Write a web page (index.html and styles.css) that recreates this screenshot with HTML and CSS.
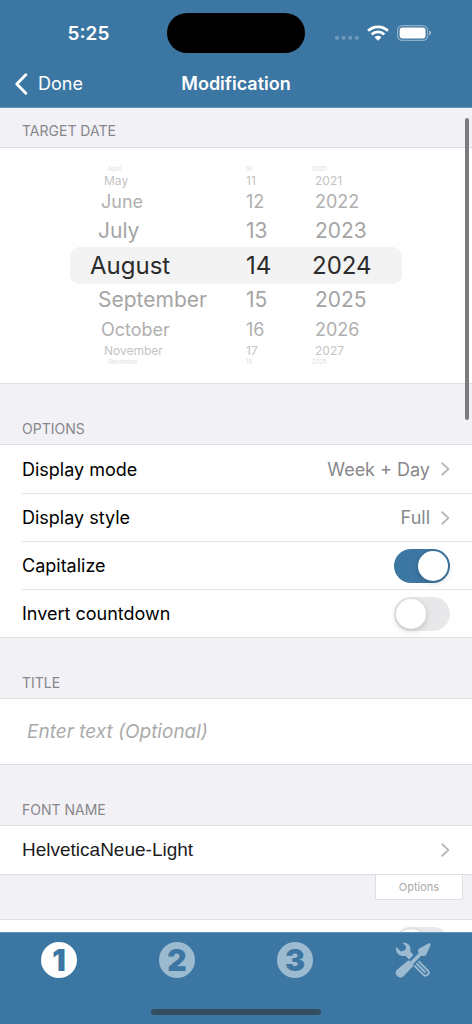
FILE: index.html
```html
<!DOCTYPE html>
<html lang="en">
<head>
<meta charset="utf-8">
<meta name="viewport" content="width=device-width, initial-scale=1">
<title>Modification</title>
<link rel="stylesheet" href="styles.css">
</head>
<body>
<div class="app">
  <header class="top">
    <div class="status">
      <time class="clock">5:25</time>
      <div class="island"></div>
      <div class="indicators">
        <svg class="dots" width="25" height="16" viewBox="0 0 25 16" aria-hidden="true"><g fill="#fff" opacity=".25"><circle cx="3" cy="12.8" r="2.1"/><circle cx="9.600" cy="12.8" r="2.1"/><circle cx="16.200" cy="12.8" r="2.1"/><circle cx="22.800" cy="12.8" r="2.1"/></g></svg>
        <svg width="22" height="16" viewBox="0 0 22 16" aria-hidden="true"><g fill="none" stroke="#fff" stroke-width="2.8"><path d="M1.1 5.8a14.2 14.2 0 0 1 19.8 0"/><path d="M4.7 9.5a9 9 0 0 1 12.6 0"/></g><path d="M7.5 12.2a5 5 0 0 1 7 0L11 15.8z" fill="#fff"/></svg>
        <svg width="35" height="16" viewBox="0 0 35 16" aria-hidden="true"><rect x=".6" y=".6" width="30" height="14.8" rx="4.8" fill="none" stroke="#fff" stroke-opacity=".42" stroke-width="1.2"/><rect x="2.6" y="2.6" width="26" height="10.8" rx="3" fill="#fff"/><path d="M32.2 5.3v5.4c2.4-.8 2.4-4.6 0-5.4z" fill="#fff" opacity=".5"/></svg>
      </div>
    </div>
    <nav class="bar">
      <button class="back" type="button">
        <svg width="13" height="22" viewBox="0 0 13 22" aria-hidden="true"><path d="M10.800 1.800 1.800 11l9 9.200" fill="none" stroke="#fff" stroke-width="2.9" stroke-linecap="round" stroke-linejoin="round"/></svg>
        Done
      </button>
      <h1 class="title">Modification</h1>
    </nav>
  </header>

  <main class="content">
    <h2 class="section first">TARGET DATE</h2>
    <div class="panel picker">
      <ul class="wheel month" role="listbox" aria-label="Month">
        <li class="far">April</li><li class="r3">May</li><li class="r2">June</li><li class="r1">July</li>
        <li class="current" role="option" aria-selected="true">August</li>
        <li class="r1">September</li><li class="r2">October</li><li class="r3">November</li><li class="far">December</li>
      </ul>
      <ul class="wheel day" role="listbox" aria-label="Day">
        <li class="far">10</li><li class="r3">11</li><li class="r2">12</li><li class="r1">13</li>
        <li class="current" role="option" aria-selected="true">14</li>
        <li class="r1">15</li><li class="r2">16</li><li class="r3">17</li><li class="far">18</li>
      </ul>
      <ul class="wheel year" role="listbox" aria-label="Year">
        <li class="far">2020</li><li class="r3">2021</li><li class="r2">2022</li><li class="r1">2023</li>
        <li class="current" role="option" aria-selected="true">2024</li>
        <li class="r1">2025</li><li class="r2">2026</li><li class="r3">2027</li><li class="far">2028</li>
      </ul>
    </div>

    <h2 class="section">OPTIONS</h2>
    <div class="panel rows">
      <button class="row" type="button"><span>Display mode</span><span class="value">Week + Day</span><svg class="chev" viewBox="0 0 9 14" aria-hidden="true"><path d="M1.2 1.2 7.4 7l-6.2 5.8"/></svg></button>
      <button class="row" type="button"><span>Display style</span><span class="value">Full</span><svg class="chev" viewBox="0 0 9 14" aria-hidden="true"><path d="M1.2 1.2 7.4 7l-6.2 5.8"/></svg></button>
      <label class="row"><span>Capitalize</span><input class="switch" type="checkbox" role="switch" checked></label>
      <label class="row"><span>Invert countdown</span><input class="switch" type="checkbox" role="switch"></label>
    </div>

    <h2 class="section" id="title-label">TITLE</h2>
    <div class="panel entry"><input class="text" type="text" placeholder="Enter text (Optional)" aria-labelledby="title-label"></div>

    <h2 class="section">FONT NAME</h2>
    <div class="panel rows">
      <button class="row font" type="button"><span>HelveticaNeue-Light</span><svg class="chev" viewBox="0 0 9 14" aria-hidden="true"><path d="M1.2 1.2 7.4 7l-6.2 5.8"/></svg></button>
    </div>
    <div class="more"><button class="options" type="button">Options</button></div>
    <div class="panel rows">
      <div class="row"><input class="switch" type="checkbox" role="switch" aria-label="Font option"></div>
    </div>
    <div class="scrollbar"></div>
  </main>

  <footer class="bottom">
    <nav class="tabs">
      <button class="tab active" type="button"><span class="num">1</span></button>
      <button class="tab" type="button"><span class="num">2</span></button>
      <button class="tab" type="button"><span class="num">3</span></button>
      <button class="tab" type="button" aria-label="Settings">
        <svg width="36" height="36" viewBox="0 0 36 36" aria-hidden="true">
          <g fill="none" stroke-linecap="round">
            <path d="m20 20 10.500 10.500" stroke="#9dbbd0" stroke-width="8"/>
            <path d="m20 20 10.500 10.500" stroke="#3c76a2" stroke-width="4.400"/>
            <path d="m21.500 21.500 8.500 8.500" stroke="#9dbbd0" stroke-width="1.800"/>
          </g>
          <path d="M1.200 5 6 9.500 10.500 8 11 4.500 7.500.8C13 .2 16.500 4 15.300 9.500L18.500 13 14 17.500 10.500 13.700C5 15-.2 11 1.200 5z" fill="#9dbbd0"/>
          <path d="M10 27.500 28 9.500" stroke="#3c76a2" stroke-width="7"/>
          <path d="M10 27.500 28 9.500" stroke="#9dbbd0" stroke-width="3.800"/>
          <path d="M12.200 19.200c1-.9 2.300-.8 3.200.1l2.300 2.300c.9.900.9 2 .1 3L8.800 34c-2 2-4.800 2-6.700.1s-1.900-4.700.1-6.600z" fill="#9dbbd0"/>
          <path d="m23.500 7 9.700-5.600c1.600-.8 3 .6 2.200 2.200L31 13.300c-1.300 1.300-4.500 1-6.200-.6S22.500 8.300 23.500 7z" fill="#9dbbd0"/>
        </svg>
      </button>
    </nav>
    <div class="home"></div>
  </footer>
</div>
</body>
</html>
```

FILE: styles.css
```css
* { box-sizing: border-box; }

body {
  margin: 0;
  font-family: Inter, "Liberation Sans", sans-serif;
  font-size: 18px;
  color: #000;
  background: #f2f1f6;
}

button, input { font: inherit; color: inherit; border: 0; background: none; padding: 0; margin: 0; }
h1, h2, ul { margin: 0; padding: 0; }

.app { display: flex; flex-direction: column; height: 100vh; }

.top { background: #3c76a2; color: #fff; border-bottom: 1px solid #6594b6; }
.status {
  display: grid;
  grid-template-columns: 1fr 138px 1fr;
  align-items: center;
  height: 60px;
  padding-top: 6px;
}
.clock { font-size: 19px; font-weight: 600; padding-left: 10px; text-align: center; }
.island { height: 40px; border-radius: 20px; background: #000; }
.indicators { display: flex; gap: 8px; padding-left: 29px; }

.bar {
  display: grid;
  grid-template-columns: 1fr auto 1fr;
  align-items: center;
  height: 47px;
  padding: 0 15px;
}
.back { display: flex; align-items: center; gap: 10px; justify-self: start; }
.title { font-size: 18px; font-weight: 600; }

.content { position: relative; flex: 1; min-height: 0; overflow: hidden; }
.section {
  display: flex;
  align-items: flex-end;
  height: 60px;
  padding: 0 22px 7px;
  font-size: 14px;
  line-height: 16px;
  font-weight: 400;
  color: #87868b;
}
.section.first { height: 39px; padding-bottom: 8px; }

.panel { background: #fff; border: solid #dfdfe3; border-width: 1px 0; }

.picker { display: flex; justify-content: center; align-items: center; height: 237px; }
.wheel { list-style: none; color: #a5a5a5; }
.wheel li { white-space: nowrap; }
.month { width: 176px; }
.day { width: 66px; }
.year { width: 90px; }
.wheel .current { height: 37px; font-size: 24px; line-height: 37px; color: #2b2b2b; background: #f3f3f3; }
.r1 { height: 32px; font-size: 21px; line-height: 32px; }
.r2 { height: 27px; font-size: 18px; line-height: 27px; color: #b0b0b0; }
.r3 { height: 15px; font-size: 12px; line-height: 15px; color: #c4c4c4; }
.far { height: 8px; font-size: 6px; line-height: 8px; color: #dcdcdc; }
.month .current { padding-left: 20px; border-radius: 9px 0 0 9px; }
.year .current { border-radius: 0 9px 9px 0; }
.month .r1 { padding-left: 28px; }
.month .r2 { padding-left: 31px; }
.month .r3 { padding-left: 34px; }
.month .far { padding-left: 38px; }
.year .r1, .year .r2, .year .r3 { padding-left: 3px; }

.rows { padding-left: 22px; }
.row {
  display: flex;
  align-items: center;
  width: 100%;
  height: 48px;
  padding-right: 22px;
  text-align: left;
}
.row + .row { border-top: 1px solid #e3e3e6; }
.row > :last-child { margin-left: auto; }
.value { margin-left: auto; color: #87878b; }
.row .value + .chev { margin-left: 11px; }
.chev { width: 9px; height: 14px; fill: none; stroke: #bcbcc0; stroke-width: 2; stroke-linecap: round; stroke-linejoin: round; }
.font { font-family: "Liberation Sans", sans-serif; font-size: 19px; color: #1c1c1c; }

.switch {
  appearance: none;
  display: flex;
  width: 56px;
  height: 34px;
  padding: 2px;
  border-radius: 17px;
  background: #e8e8ea;
}
.switch::before {
  content: "";
  width: 30px;
  height: 30px;
  border-radius: 50%;
  background: #fff;
  box-shadow: 0 2px 6px rgba(0, 0, 0, .18);
}
.switch:checked { justify-content: flex-end; background: #3c76a2; }

.entry { padding: 0 27px; }
.text { display: block; width: 100%; height: 65px; font-size: 19px; font-style: italic; outline: 0; }
.text::placeholder { color: #aaa; opacity: 1; }

.more { display: flex; justify-content: flex-end; align-items: flex-start; height: 44px; padding-right: 9px; }
.options {
  width: 88px;
  height: 25px;
  border: solid #dfdfe3;
  border-width: 0 1px 1px;
  background: #fff;
  font-size: 11px;
  color: #aaa;
}

.scrollbar { position: absolute; top: 10px; right: 3px; width: 4px; height: 302px; border-radius: 2px; background: #7c7c7e; }

.bottom {
  display: flex;
  flex-direction: column;
  justify-content: space-between;
  align-items: center;
  height: 92px;
  padding: 9px 0;
  background: #3c76a2;
  border-top: 1px solid #6594b6;
}
.tabs { display: flex; width: 100%; }
.tab { flex: 1; display: flex; justify-content: center; }
.num {
  width: 36px;
  height: 36px;
  border-radius: 50%;
  background: #9dbbd0;
  color: #3c76a2;
  font-size: 30px;
  line-height: 36px;
  font-weight: 900;
  text-align: center;
}
.active .num { background: #fff; }
.home { width: 36%; height: 6px; border-radius: 3px; background: #344c5f; }
```
